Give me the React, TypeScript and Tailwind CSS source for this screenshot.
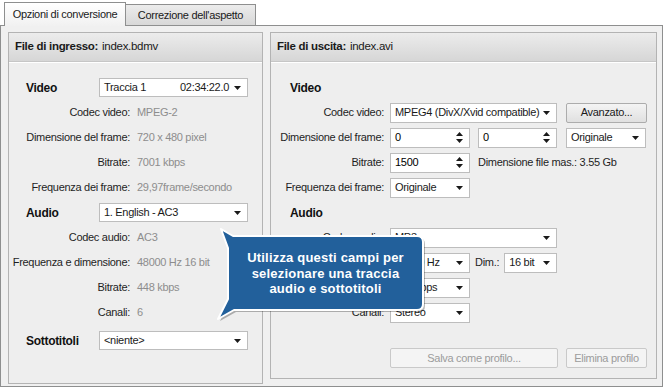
import React from 'react';

function Arrow() {
  return (
    <svg width="7" height="4" viewBox="0 0 7 4" className="shrink-0">
      <path d="M0 0H7L3.5 4Z" fill="#1a1a1a" />
    </svg>
  );
}

function SpinArrows() {
  return (
    <svg width="7" height="11" viewBox="0 0 7 11" className="shrink-0">
      <path d="M3.5 0L7 4H0Z M0 7H7L3.5 11Z" fill="#1a1a1a" />
    </svg>
  );
}

interface SelectProps {
  value: string;
  extra?: string;
  className: string;
}

function Select({ value, extra, className }: SelectProps) {
  return (
    <div className={`flex items-center bg-white border border-[#bdbdbd] pl-[4px] pr-[6px] text-[#1a1a1a] ${className}`}>
      <span className="flex-1 whitespace-nowrap">{value}</span>
      {extra && <span className="mr-[5px]">{extra}</span>}
      <Arrow />
    </div>
  );
}

function Spin({ value, className }: { value: string; className: string }) {
  return (
    <div className={`flex items-center bg-white border border-[#bdbdbd] pl-[4px] pr-[6px] h-[20px] ${className}`}>
      <span className="flex-1">{value}</span>
      <SpinArrows />
    </div>
  );
}

function InfoRow({ label, value }: { label: string; value: string }) {
  return (
    <div className="flex items-center h-[25px]">
      <span className="w-[121px] text-right whitespace-nowrap text-[#1e1e1e]">{label}</span>
      <span className="ml-[7px] text-[#8d8d8d] whitespace-nowrap">{value}</span>
    </div>
  );
}

function RightRow({ label, children }: { label: string; children: React.ReactNode }) {
  return (
    <div className="flex items-center h-[25px]">
      <span className="w-[113px] text-right whitespace-nowrap text-[#1e1e1e]">{label}</span>
      <div className="ml-[6px] flex items-center">{children}</div>
    </div>
  );
}

function PanelHeader({ title, file }: { title: string; file: string }) {
  return (
    <div className="h-[29px] flex items-center pl-[6px] bg-gradient-to-b from-[#ececec] to-[#d6d6d6] border-b border-[#c6c6c6] text-[11.5px] text-[#1a1a1a]">
      <span className="font-bold">{title}</span>
      <span className="ml-[4px]">{file}</span>
    </div>
  );
}

function InputPanel() {
  return (
    <div className="w-[255px] h-[352px] border border-[#b3b3b3] bg-[#eeeeee] flex flex-col">
      <PanelHeader title="File di ingresso:" file="index.bdmv" />
      <div className="flex-1 border-t border-white pt-[12px]">
        <div className="flex items-center h-[25px]">
          <span className="w-[90px] pl-[17px] font-bold text-[12px] text-[#111]">Video</span>
          <Select value="Traccia 1" extra="02:34:22.0" className="w-[149px] h-[19px]" />
        </div>
        <InfoRow label="Codec video:" value="MPEG-2" />
        <InfoRow label="Dimensione del frame:" value="720 x 480 pixel" />
        <InfoRow label="Bitrate:" value="7001 kbps" />
        <InfoRow label="Frequenza dei frame:" value="29,97frame/secondo" />
        <div className="flex items-center h-[25px]">
          <span className="w-[90px] pl-[17px] font-bold text-[12px] text-[#111]">Audio</span>
          <Select value="1. English - AC3" className="w-[149px] h-[19px]" />
        </div>
        <InfoRow label="Codec audio:" value="AC3" />
        <InfoRow label="Frequenza e dimensione:" value="48000 Hz 16 bit" />
        <InfoRow label="Bitrate:" value="448 kbps" />
        <InfoRow label="Canali:" value="6" />
        <div className="flex items-center h-[25px] mt-[3px]">
          <span className="w-[90px] pl-[17px] font-bold text-[12px] text-[#111]">Sottotitoli</span>
          <Select value="<niente>" className="w-[149px] h-[19px]" />
        </div>
      </div>
    </div>
  );
}

function OutputPanel() {
  return (
    <div className="w-[387px] h-[347px] border border-[#b3b3b3] bg-[#eeeeee] flex flex-col">
      <PanelHeader title="File di uscita:" file="index.avi" />
      <div className="flex-1 border-t border-white pt-[12px]">
        <div className="flex items-center h-[25px] pl-[19px] font-bold text-[12px] text-[#111]">Video</div>
        <RightRow label="Codec video:">
          <Select value="MPEG4 (DivX/Xvid compatible)" className="w-[167px] h-[20px]" />
          <button className="ml-[9px] w-[81px] h-[20px] border border-[#acacac] rounded-[2px] bg-gradient-to-b from-[#f4f4f4] to-[#e0e0e0] text-[#1a1a1a]">
            Avanzato...
          </button>
        </RightRow>
        <RightRow label="Dimensione del frame:">
          <Spin value="0" className="w-[80px]" />
          <Spin value="0" className="ml-[8px] w-[79px]" />
          <Select value="Originale" className="ml-[9px] w-[80px] h-[20px]" />
        </RightRow>
        <RightRow label="Bitrate:">
          <Spin value="1500" className="w-[80px]" />
          <span className="ml-[8px] whitespace-nowrap text-[#1e1e1e]">Dimensione file mas.: 3.55 Gb</span>
        </RightRow>
        <RightRow label="Frequenza dei frame:">
          <Select value="Originale" className="w-[80px] h-[20px]" />
        </RightRow>
        <div className="flex items-center h-[25px] pl-[19px] font-bold text-[12px] text-[#111]">Audio</div>
        <RightRow label="Codec audio:">
          <Select value="MP3" className="w-[167px] h-[20px]" />
        </RightRow>
        <RightRow label="Frequenza e dimensione:">
          <Select value="48000 Hz" className="w-[80px] h-[20px]" />
          <span className="ml-[5px] text-[#1e1e1e]">Dim.:</span>
          <Select value="16 bit" className="ml-[5px] w-[53px] h-[20px]" />
        </RightRow>
        <RightRow label="Bitrate:">
          <Select value="128 kbps" className="w-[80px] h-[20px]" />
        </RightRow>
        <RightRow label="Canali:">
          <Select value="Stereo" className="w-[80px] h-[20px]" />
        </RightRow>
        <div className="flex mt-[23px] pl-[119px]">
          <button className="w-[168px] h-[20px] border border-[#c9c9c9] rounded-[2px] bg-[#f4f4f4] text-[#9c9c9c]">
            Salva come profilo...
          </button>
          <button className="ml-[8px] w-[81px] h-[20px] border border-[#c9c9c9] rounded-[2px] bg-[#f4f4f4] text-[#9c9c9c]">
            Elimina profilo
          </button>
        </div>
      </div>
    </div>
  );
}

function Callout() {
  return (
    <div className="absolute left-[210px] top-[222px] w-[220px] h-[105px]">
      <svg width="220" height="105" viewBox="0 0 220 105" className="absolute left-0 top-0">
        <path
          d="M23 14H207Q213 14 213 20V82Q213 88 207 88H24L8 97L18 77V26L11 7Z"
          fill="rgba(0,0,0,0.28)"
          transform="translate(2 2)"
        />
        <path
          d="M23 14H207Q213 14 213 20V82Q213 88 207 88H24L8 97L18 77V26L11 7Z"
          fill="#22609b"
          stroke="#ffffff"
          strokeWidth="2"
          strokeLinejoin="round"
        />
      </svg>
      <div className="absolute left-[18px] top-[28px] w-[195px] text-center text-white font-bold text-[13px] leading-[15.5px] tracking-[0.2px]">
        Utilizza questi campi per
        <br />
        selezionare una traccia
        <br />
        audio e sottotitoli
      </div>
    </div>
  );
}

export default function App() {
  return (
    <div className="relative w-[665px] h-[388px] bg-white overflow-hidden font-['Liberation_Sans',Arial,sans-serif] text-[11px] tracking-[-0.3px]">
      <div className="flex items-end h-[25px] pl-[4px]">
        <div className="relative z-10 -mb-px h-[24px] w-[122px] flex items-center justify-center border border-b-0 border-[#8e8f8f] bg-gradient-to-b from-white to-[#f1f1f1] text-[11px] text-[#1a1a1a]">
          Opzioni di conversione
        </div>
        <div className="h-[21px] w-[130px] flex items-center justify-center border border-b-0 border-l-0 border-[#8e8f8f] bg-gradient-to-b from-[#ececec] to-[#d8d8d8] text-[#1a1a1a]">
          Correzione dell'aspetto
        </div>
      </div>
      <div className="w-[663px] h-[362px] border border-[#8e8f8f] bg-[#f0f0f0] flex items-start gap-[7px] pt-[6px] pl-[7px]">
        <InputPanel />
        <OutputPanel />
      </div>
      <Callout />
    </div>
  );
}
